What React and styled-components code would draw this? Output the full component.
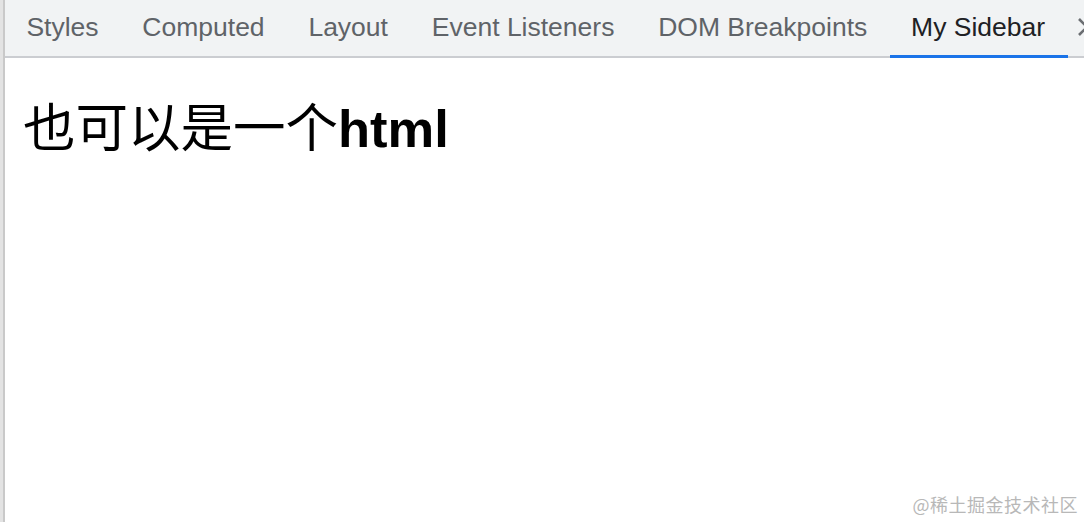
import React from 'react';
import styled, { createGlobalStyle } from 'styled-components';

const GlobalStyle = createGlobalStyle`
  html, body {
    margin: 0;
    padding: 0;
    background: #ffffff;
  }
  body {
    font-family: 'Liberation Sans', Arial, 'Noto Sans CJK SC', sans-serif;
  }
`;

const Frame = styled.div`
  position: relative;
  height: 522px;
  width: 1084px;
  overflow: hidden;
  border-left: 3px solid #e3e3e3;
  box-sizing: border-box;
`;

const Panel = styled.div`
  height: 100%;
  border-left: 2px solid #c9c9c9;
  display: flex;
  flex-direction: column;
`;

const TabBar = styled.nav`
  display: flex;
  align-items: stretch;
  height: 58px;
  box-sizing: border-box;
  background: #f1f3f4;
  border-bottom: 2px solid #cbcdd1;
  white-space: nowrap;
`;

const Tab = styled.div`
  position: relative;
  display: flex;
  align-items: center;
  padding: 0 22.4px 2px 21.4px;
  font-size: 26.5px;
  color: ${(p) => (p.$active ? '#202124' : '#5f6368')};

  &::after {
    content: '';
    display: ${(p) => (p.$active ? 'block' : 'none')};
    position: absolute;
    left: 0;
    right: 0;
    bottom: -2px;
    height: 3px;
    background: #1a73e8;
  }
`;

const More = styled.div`
  display: flex;
  align-items: center;
  padding-left: 8px;
  padding-bottom: 2px;
`;

const Content = styled.main`
  flex: 1;
  padding: 22px 18px;
`;

const Heading = styled.h1`
  margin: 14px 0 0;
  font-size: 52.5px;
  line-height: 60px;
  color: #000;
  font-weight: 700;
`;

const Cjk = styled.span`
  font-family: 'Noto Sans CJK SC', sans-serif;
  font-weight: 400;
`;

const Watermark = styled.div`
  position: absolute;
  right: 6px;
  bottom: 5px;
  font-size: 18px;
  color: #b8b8b8;
  font-family: 'Noto Sans CJK SC', sans-serif;
  letter-spacing: 0.5px;
`;

const tabs = ['Styles', 'Computed', 'Layout', 'Event Listeners', 'DOM Breakpoints', 'My Sidebar'];

export default function App() {
  return (
    <>
      <GlobalStyle />
      <Frame>
        <Panel>
          <TabBar>
            {tabs.map((t) => (
              <Tab key={t} $active={t === 'My Sidebar'}>
                {t}
              </Tab>
            ))}
            <More>
              <svg width="22" height="22" viewBox="0 0 22 22">
                <path d="M3 3 L19 19 M19 3 L3 19" stroke="#6b6e72" strokeWidth="2.6" fill="none" />
              </svg>
            </More>
          </TabBar>
          <Content>
            <Heading>
              <Cjk>也可以是一个</Cjk>html
            </Heading>
          </Content>
        </Panel>
        <Watermark>@稀土掘金技术社区</Watermark>
      </Frame>
    </>
  );
}
